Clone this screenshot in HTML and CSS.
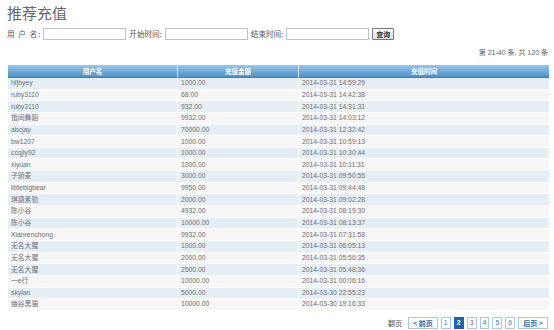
FILE: index.html
```html
<!DOCTYPE html>
<html lang="zh-CN">
<head>
    <meta charset="UTF-8">
    <meta name="viewport" content="width=device-width, initial-scale=1.0">
    <title>推荐充值</title>
    <link rel="stylesheet" href="styles.css">
</head>
<body>
    <div class="page">
        <h1>推荐充值</h1>

        <form class="search">
            <label class="lbl lbl-user">用 户 名:</label>
            <input type="text" class="txt">
            <label class="lbl">开始时间:</label>
            <input type="text" class="txt">
            <label class="lbl">结束时间:</label>
            <input type="text" class="txt">
            <button type="button" class="btn">查询</button>
        </form>

        <div class="summary">第 21-40 条, 共 120 条</div>

        <table class="list">
            <thead>
                <tr>
                    <th class="c1">用户名</th>
                    <th class="c2">充值金额</th>
                    <th class="c3">充值时间</th>
                </tr>
            </thead>
            <tbody>
                <tr><td>hfjbyey</td><td>1000.00</td><td>2014-03-31 14:59:29</td></tr>
                <tr><td>ruby3110</td><td>68.00</td><td>2014-03-31 14:42:38</td></tr>
                <tr><td>ruby3110</td><td>932.00</td><td>2014-03-31 14:31:31</td></tr>
                <tr><td>指间舞蹈</td><td>9932.00</td><td>2014-03-31 14:03:12</td></tr>
                <tr><td>abcjay</td><td>70000.00</td><td>2014-03-31 12:32:42</td></tr>
                <tr><td>bw1207</td><td>1000.00</td><td>2014-03-31 10:59:13</td></tr>
                <tr><td>ccqjly92</td><td>1000.00</td><td>2014-03-31 10:30:44</td></tr>
                <tr><td>xiyuan</td><td>1000.00</td><td>2014-03-31 10:11:31</td></tr>
                <tr><td>子骄麦</td><td>3000.00</td><td>2014-03-31 09:50:55</td></tr>
                <tr><td>littlebigbear</td><td>9950.00</td><td>2014-03-31 09:44:48</td></tr>
                <tr><td>琪葫素勤</td><td>2000.00</td><td>2014-03-31 09:02:28</td></tr>
                <tr><td>陈小谷</td><td>4932.00</td><td>2014-03-31 08:19:30</td></tr>
                <tr><td>陈小谷</td><td>10000.00</td><td>2014-03-31 08:13:37</td></tr>
                <tr><td>Xianrenchong</td><td>9932.00</td><td>2014-03-31 07:31:58</td></tr>
                <tr><td>无名大猩</td><td>1000.00</td><td>2014-03-31 06:05:13</td></tr>
                <tr><td>无名大猩</td><td>2000.00</td><td>2014-03-31 05:56:35</td></tr>
                <tr><td>无名大猩</td><td>2500.00</td><td>2014-03-31 05:48:36</td></tr>
                <tr><td>一e行</td><td>10000.00</td><td>2014-03-31 00:06:16</td></tr>
                <tr><td>skylan</td><td>5000.00</td><td>2014-03-30 22:55:23</td></tr>
                <tr><td>幽谷黑猫</td><td>10000.00</td><td>2014-03-30 19:16:33</td></tr>
            </tbody>
        </table>

        <div class="pager">
            <span class="pager-label">翻页</span>
            <a class="pg wide">&lt; 前页</a>
            <a class="pg">1</a>
            <a class="pg active">2</a>
            <a class="pg">3</a>
            <a class="pg">4</a>
            <a class="pg">5</a>
            <a class="pg">6</a>
            <a class="pg wide">后页 &gt;</a>
        </div>
    </div>
</body>
</html>
```

FILE: styles.css
```css
body {
    margin: 0;
    background: #fff;
    font-family: "Liberation Sans", "Noto Sans CJK SC", sans-serif;
    color: #666;
}

.page {
    width: 541px;
    padding: 3px 5px 0 8px;
}

h1 {
    margin: 0 0 0 -1px;
    font-family: "Noto Sans CJK SC", sans-serif;
    font-size: 15px;
    line-height: 20px;
    font-weight: 400;
    color: #666;
}

.search {
    display: flex;
    align-items: center;
    height: 13px;
    margin: 4px 0 0 -1px;
}

.lbl {
    font-family: "Noto Sans CJK SC", sans-serif;
    font-size: 7.6px;
    line-height: 10px;
    color: #555;
    margin: 0 3px 0 0;
    white-space: nowrap;
}

.lbl-user {
    letter-spacing: 1px;
    margin-right: 2px;
}

.txt {
    width: 83px;
    height: 12px;
    box-sizing: border-box;
    margin: 0 3px 0 0;
    padding: 0;
    border: 1px solid #bcc4c9;
    background: #fff;
}

.btn {
    height: 12px;
    width: 22px;
    padding: 0;
    border: 1px solid #777;
    border-radius: 1px;
    background: linear-gradient(#fafafa, #e2e2e2);
    font-family: "Noto Sans CJK SC", sans-serif;
    font-size: 7px;
    font-weight: 700;
    line-height: 10px;
    color: #333;
}

.summary {
    margin-top: 8px;
    text-align: right;
    font-size: 7px;
    line-height: 10px;
    padding-right: 1px;
    color: #666;
}

.list {
    margin-top: 7px;
    width: 541px;
    border-collapse: separate;
    border-spacing: 0;
    table-layout: fixed;
    font-size: 6.8px;
}

.c1 { width: 169px; }
.c2 { width: 121px; }
.c3 { width: 251px; }

.list th {
    box-sizing: border-box;
    height: 13px;
    padding: 0;
    background: linear-gradient(#9cc6e6, #4f90c4);
    border-left: 1px solid #d8e8f4;
    border-bottom: 1px solid #3e7fb4;
    color: #fff;
    font-family: "Noto Sans CJK SC", sans-serif;
    font-weight: 700;
    font-size: 6.5px;
    line-height: 8px;
    text-align: center;
}

.list th:first-child {
    border-left: none;
}

.list td {
    box-sizing: border-box;
    height: 11.65px;
    padding: 0 0 0 3px;
    border-bottom: 1px solid #fff;
    font-size: 6.8px;
    line-height: 8px;
    color: #707070;
    white-space: nowrap;
    overflow: hidden;
}

.list td + td {
    border-left: 1px solid #fff;
}

.list tbody tr:nth-child(odd) td {
    background: #e4eef4;
}

.list tbody tr:nth-child(even) td {
    background: #f6f6f6;
}

.pager {
    display: flex;
    justify-content: flex-end;
    align-items: center;
    gap: 3px;
    margin-top: 6px;
    height: 12px;
    padding-right: 1px;
}

.pager-label {
    font-family: "Noto Sans CJK SC", sans-serif;
    font-size: 7px;
    line-height: 10px;
    color: #555;
    margin-right: 3px;
}

.pg {
    display: flex;
    align-items: center;
    justify-content: center;
    box-sizing: border-box;
    height: 12px;
    min-width: 9px;
    padding: 0 2px;
    border: 1px solid #a9c9e2;
    font-size: 7px;
    line-height: 10px;
    color: #3f79ad;
    text-decoration: none;
}

.pg.wide {
    padding: 0 4px;
    font-weight: 700;
    font-family: "Noto Sans CJK SC", sans-serif;
    color: #2c64a0;
}

.pg.active {
    background: #1f62b0;
    border-color: #1f62b0;
    color: #fff;
    font-weight: 700;
}
```
